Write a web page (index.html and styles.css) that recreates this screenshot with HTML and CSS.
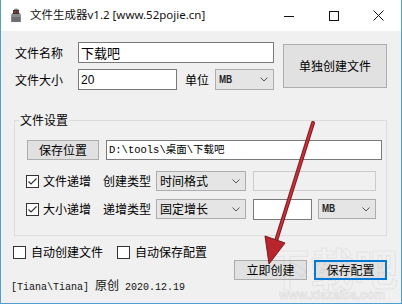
FILE: index.html
```html
<!DOCTYPE html>
<html lang="zh-CN">
<head>
<meta charset="utf-8">
<title>文件生成器v1.2</title>
<link rel="stylesheet" href="styles.css">
</head>
<body>
<div class="window">
  <div class="titlebar">
    <svg class="app-icon" width="16" height="16" viewBox="0 0 16 16">
      <path d="M3 15 L3 9 Q3 6 6 5.5 L6 2 Q8 1 10.5 2 L10.5 5.5 Q13 6 13 9 L13 15 Z" fill="#8a8a8a"/>
      <rect x="5" y="3" width="6" height="4" fill="#3a3a3a"/>
      <rect x="6" y="4" width="2" height="1.5" fill="#c0303a"/>
      <rect x="9" y="4" width="1.5" height="1.5" fill="#c0303a"/>
      <path d="M4 15 L4 10 L12 10 L12 15 Z" fill="#6e6e6e"/>
    </svg>
    <span class="title">文件生成器v1.2 [www.52pojie.cn]</span>
    <div class="controls">
      <span class="ctl"><svg width="10" height="10" viewBox="0 0 10 10"><path d="M0 5.5 H10" stroke="#111" stroke-width="1"/></svg></span>
      <span class="ctl"><svg width="10" height="10" viewBox="0 0 10 10"><rect x="0.5" y="0.5" width="9" height="9" fill="none" stroke="#111" stroke-width="1"/></svg></span>
      <span class="ctl"><svg width="11" height="11" viewBox="0 0 11 11"><path d="M0.5 0.5 L10.5 10.5 M10.5 0.5 L0.5 10.5" stroke="#111" stroke-width="1"/></svg></span>
    </div>
  </div>
  <div class="client">
    <div class="top">
      <div class="fields">
        <div class="row">
          <span class="lbl">文件名称</span>
          <div class="edit name">下载吧</div>
        </div>
        <div class="row">
          <span class="lbl">文件大小</span>
          <div class="edit size">20</div>
          <span class="unit">单位</span>
          <div class="combo unit-combo"><span class="mb">MB</span><svg class="chev" width="8" height="5" viewBox="0 0 8 5"><path d="M0.5 0.5 L4 4 L7.5 0.5" fill="none" stroke="#555" stroke-width="1"/></svg></div>
        </div>
      </div>
      <button class="btn big">单独创建文件</button>
    </div>

    <fieldset class="group">
      <legend>文件设置</legend>
      <div class="grow first">
        <button class="btn save-loc">保存位置</button>
        <div class="edit path">D:\tools\桌面\下载吧</div>
      </div>
      <div class="grow">
        <span class="chk"><span class="box"><svg width="11" height="11" viewBox="0 0 11 11"><path d="M1.5 5.5 L4 8 L9.5 2.5" fill="none" stroke="#333" stroke-width="1.2"/></svg></span>文件递增</span>
        <span class="lbl2">创建类型</span>
        <div class="combo type"><span>时间格式</span><svg class="chev" width="8" height="5" viewBox="0 0 8 5"><path d="M0.5 0.5 L4 4 L7.5 0.5" fill="none" stroke="#555" stroke-width="1"/></svg></div>
        <div class="edit disabled fmt"></div>
      </div>
      <div class="grow">
        <span class="chk"><span class="box"><svg width="11" height="11" viewBox="0 0 11 11"><path d="M1.5 5.5 L4 8 L9.5 2.5" fill="none" stroke="#333" stroke-width="1.2"/></svg></span>大小递增</span>
        <span class="lbl2">递增类型</span>
        <div class="combo type"><span>固定增长</span><svg class="chev" width="8" height="5" viewBox="0 0 8 5"><path d="M0.5 0.5 L4 4 L7.5 0.5" fill="none" stroke="#555" stroke-width="1"/></svg></div>
        <div class="edit step"></div>
        <div class="combo step-unit"><span class="mb">MB</span><svg class="chev" width="8" height="5" viewBox="0 0 8 5"><path d="M0.5 0.5 L4 4 L7.5 0.5" fill="none" stroke="#555" stroke-width="1"/></svg></div>
      </div>
    </fieldset>

    <div class="opts">
      <span class="chk"><span class="box"></span>自动创建文件</span>
      <span class="chk second"><span class="box"></span>自动保存配置</span>
    </div>

    <div class="footer">
      <span class="credit">[Tiana\Tiana] <span class="cjk">原创</span> 2020.12.19</span>
      <button class="btn action">立即创建</button>
      <button class="btn action focused">保存配置</button>
    </div>
  </div>

  <div class="watermark"><span class="wm-big">下载吧</span><span class="wm-url">www.xiazaiba.com</span></div>

  <svg class="arrow" width="402" height="304" viewBox="0 0 402 304">
    <path d="M313 123 L276 241" stroke="#7c1a1e" stroke-width="4" stroke-linecap="round"/>
    <path d="M313 123 L276 241" stroke="#c8303a" stroke-width="2" stroke-linecap="round"/>
    <polygon points="265,236 285,243 269,264" fill="#b8262d" stroke="#7c1a1e" stroke-width="1"/>
  </svg>
</div>
</body>
</html>
```

FILE: styles.css
```css
* { box-sizing: border-box; }

html, body {
  margin: 0;
  padding: 0;
  background: #ffffff;
}

body {
  font-family: "Noto Sans CJK SC", "Noto Sans", sans-serif;
  font-size: 12px;
  color: #000;
}

.window {
  position: relative;
  width: 402px;
  height: 304px;
  border-left: 1px solid #4f9fd2;
  border-right: 1px solid #4f9fd2;
  border-bottom: 1px solid #4f9fd2;
  display: flex;
  flex-direction: column;
  overflow: hidden;
}

.titlebar {
  height: 31px;
  background: #ffffff;
  display: flex;
  align-items: center;
  flex: none;
}

.app-icon {
  margin-left: 7px;
  margin-top: -1px;
}

.title {
  margin-left: 6px;
  font-family: "Noto Sans", "Noto Sans CJK SC", sans-serif;
  font-size: 11.5px;
  line-height: 16px;
  color: #111;
  margin-top: -1px;
}

.controls {
  margin-left: auto;
  display: flex;
  height: 30px;
}

.ctl {
  width: 45px;
  height: 30px;
  display: flex;
  align-items: center;
  justify-content: center;
}

.client {
  flex: 1;
  background: #f0f0f0;
  padding: 11px 14px 0 14px;
  display: flex;
  flex-direction: column;
}

.top {
  display: flex;
  align-items: flex-start;
}

.fields {
  display: flex;
  flex-direction: column;
  gap: 6px;
}

.row {
  display: flex;
  align-items: center;
  height: 21px;
}

.lbl {
  width: 63px;
  line-height: 16px;
}

.edit {
  height: 21px;
  background: #fff;
  border: 1px solid #7a7a7a;
  padding: 0 2px;
  display: flex;
  align-items: center;
  line-height: 16px;
  white-space: nowrap;
  overflow: hidden;
}

.edit.name {
  width: 196px;
  font-size: 13px;
}

.edit.size {
  width: 99px;
  font-family: "Liberation Sans", sans-serif;
  font-size: 12px;
}

.unit {
  margin-left: 8px;
  line-height: 16px;
}

.combo {
  height: 21px;
  background: #e5e5e5;
  border: 1px solid #adadad;
  display: flex;
  align-items: center;
  padding-left: 3px;
  line-height: 16px;
}

.chev {
  margin-left: auto;
  margin-right: 5px;
}

.mb {
  font-family: "Liberation Sans", sans-serif;
  font-size: 10px;
  font-weight: bold;
  transform: scaleX(0.85);
  transform-origin: left center;
  color: #222;
}

.unit-combo {
  width: 59px;
  margin-left: 6px;
}

.btn {
  font-family: "Noto Sans CJK SC", sans-serif;
  font-size: 12px;
  line-height: 16px;
  color: #000;
  background: #e1e1e1;
  border: 1px solid #adadad;
  padding: 0;
  margin: 0;
}

.btn.big {
  width: 104px;
  height: 44px;
  margin-left: 9px;
  margin-top: 2px;
}

.group {
  margin: 22px 0 0 -1px;
  width: 373px;
  border: 1px solid #dcdcdc;
  padding: 0 4px 16px 11px;
  min-width: 0;
}

.group legend {
  padding: 0 1px;
  margin-left: -7px;
  line-height: 16px;
}

.grow {
  display: flex;
  align-items: center;
  height: 20px;
  margin-top: 8px;
}

.grow.first {
  margin-top: 12px;
}

.grow + .grow {
  margin-top: 11px;
}

.grow + .grow + .grow {
  margin-top: 8px;
}

.save-loc {
  width: 72px;
  height: 20px;
  margin-left: 1px;
}

.edit.path {
  width: 276px;
  height: 20px;
  margin-left: 7px;
  font-family: "Liberation Mono", "Noto Sans CJK SC", monospace;
  font-size: 10.5px;
  padding-left: 2px;
}

.chk {
  display: flex;
  align-items: center;
  line-height: 16px;
}

.box {
  width: 13px;
  height: 13px;
  border: 1px solid #333;
  background: #fff;
  margin-right: 4px;
  display: flex;
  align-items: center;
  justify-content: center;
}

.lbl2 {
  margin-left: 12px;
  line-height: 16px;
}

.combo.type {
  width: 90px;
  height: 20px;
  margin-left: 5px;
}

.edit.disabled {
  background: #f0f0f0;
  border-color: #cccccc;
}

.edit.fmt {
  width: 123px;
  height: 20px;
  margin-left: 7px;
}

.edit.step {
  width: 59px;
  height: 21px;
  margin-left: 7px;
}

.combo.step-unit {
  width: 58px;
  height: 20px;
  margin-left: 6px;
}

.opts {
  display: flex;
  align-items: center;
  height: 16px;
  margin-top: 8px;
  margin-left: -2px;
}

.opts .box {
  margin-right: 5px;
}

.opts .second {
  margin-left: 14px;
}

.footer {
  display: flex;
  align-items: flex-start;
  margin-top: 0;
}

.credit {
  font-family: "Liberation Mono", monospace;
  font-size: 10px;
  line-height: 14px;
  margin-top: 18px;
  margin-left: -4px;
  color: #111;
}

.credit .cjk {
  font-family: "Noto Sans CJK SC", sans-serif;
  font-size: 12px;
}

.btn.action {
  width: 73px;
  height: 20px;
}

.credit + .btn.action {
  margin-left: auto;
}

.btn.action + .btn.action {
  margin-left: 7px;
}

.btn.focused {
  border: 1px solid #0078d7;
  box-shadow: inset 0 0 0 1px #0078d7;
}

.watermark {
  position: absolute;
  right: 3px;
  bottom: 2px;
  display: flex;
  flex-direction: column;
  align-items: center;
  pointer-events: none;
  color: transparent;
}

.wm-big {
  font-family: "Noto Sans CJK SC", sans-serif;
  font-size: 44px;
  font-weight: bold;
  line-height: 44px;
  -webkit-text-stroke: 1px rgba(150, 150, 150, 0.16);
}

.wm-url {
  font-family: "Liberation Sans", sans-serif;
  font-size: 12px;
  font-weight: bold;
  line-height: 12px;
  -webkit-text-stroke: 1px rgba(150, 150, 150, 0.16);
}

.arrow {
  position: absolute;
  left: -1px;
  top: 0;
  pointer-events: none;
}
```
